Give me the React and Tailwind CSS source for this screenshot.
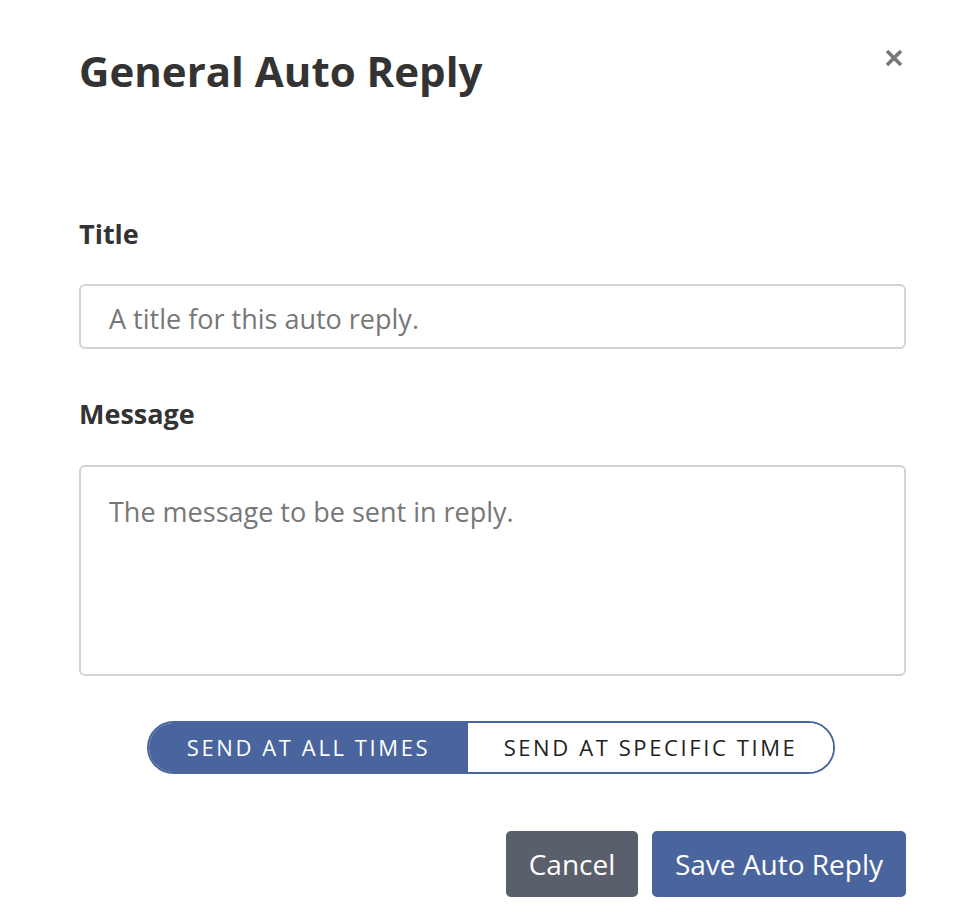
import React, {useState} from 'react';

export default function App() {
    const [modo, setModo] = useState('all');

    return (
        <main className="w-[980px] h-[920px] bg-white pl-[79px] pr-[74px] pt-[43px] text-[#333]"
              style={{fontFamily: '"Open Sans", sans-serif'}}>
            <div className="flex justify-between items-start">
                <h1 className="text-[42px] leading-[56px] font-bold">General Auto Reply</h1>
                <button className="mt-[4px] mr-[1px] w-[22px] h-[22px] flex items-center justify-center">
                    <svg width="18" height="18" viewBox="0 0 18 18">
                        <path d="M2 2 L16 16 M16 2 L2 16" stroke="#777" strokeWidth="3.6"/>
                    </svg>
                </button>
            </div>

            <label className="block mt-[117px] text-[27px] leading-[36px] font-bold">Title</label>
            <input
                className="mt-[32px] w-full h-[65px] border-2 border-[#d3d3d3] rounded-[6px] px-[28px] pt-[3px] text-[27px] placeholder:text-[#777] outline-none"
                type="text"
                placeholder="A title for this auto reply."
            />

            <label className="block mt-[47px] text-[27px] leading-[36px] font-bold">Message</label>
            <textarea
                className="mt-[33px] w-full h-[211px] border-2 border-[#d3d3d3] rounded-[6px] px-[28px] pt-[27px] text-[27px] leading-[36px] placeholder:text-[#777] outline-none resize-none block"
                placeholder="The message to be sent in reply."
            />

            <div className="flex justify-center mt-[45px] pr-[3px]">
                <div className="flex w-[688px] h-[53px] rounded-full border-2 border-[#4a659e] overflow-hidden text-[22px] tracking-[2.6px]">
                    <button
                        onClick={() => setModo('all')}
                        className={modo === 'all'
                            ? "w-[319px] bg-[#4a659e] text-white"
                            : "w-[319px] bg-white text-[#222]"}
                    >SEND AT ALL TIMES
                    </button>
                    <button
                        onClick={() => setModo('specific')}
                        className={modo === 'specific'
                            ? "flex-1 bg-[#4a659e] text-white"
                            : "flex-1 bg-white text-[#222]"}
                    >SEND AT SPECIFIC TIME
                    </button>
                </div>
            </div>

            <div className="flex justify-end gap-[14px] mt-[57px]">
                <button className="w-[132px] h-[66px] bg-[#5a606b] text-white text-[28px] rounded-[5px]">Cancel</button>
                <button className="w-[254px] h-[66px] bg-[#4a659e] text-white text-[28px] rounded-[5px]">Save Auto Reply</button>
            </div>
        </main>
    );
}
